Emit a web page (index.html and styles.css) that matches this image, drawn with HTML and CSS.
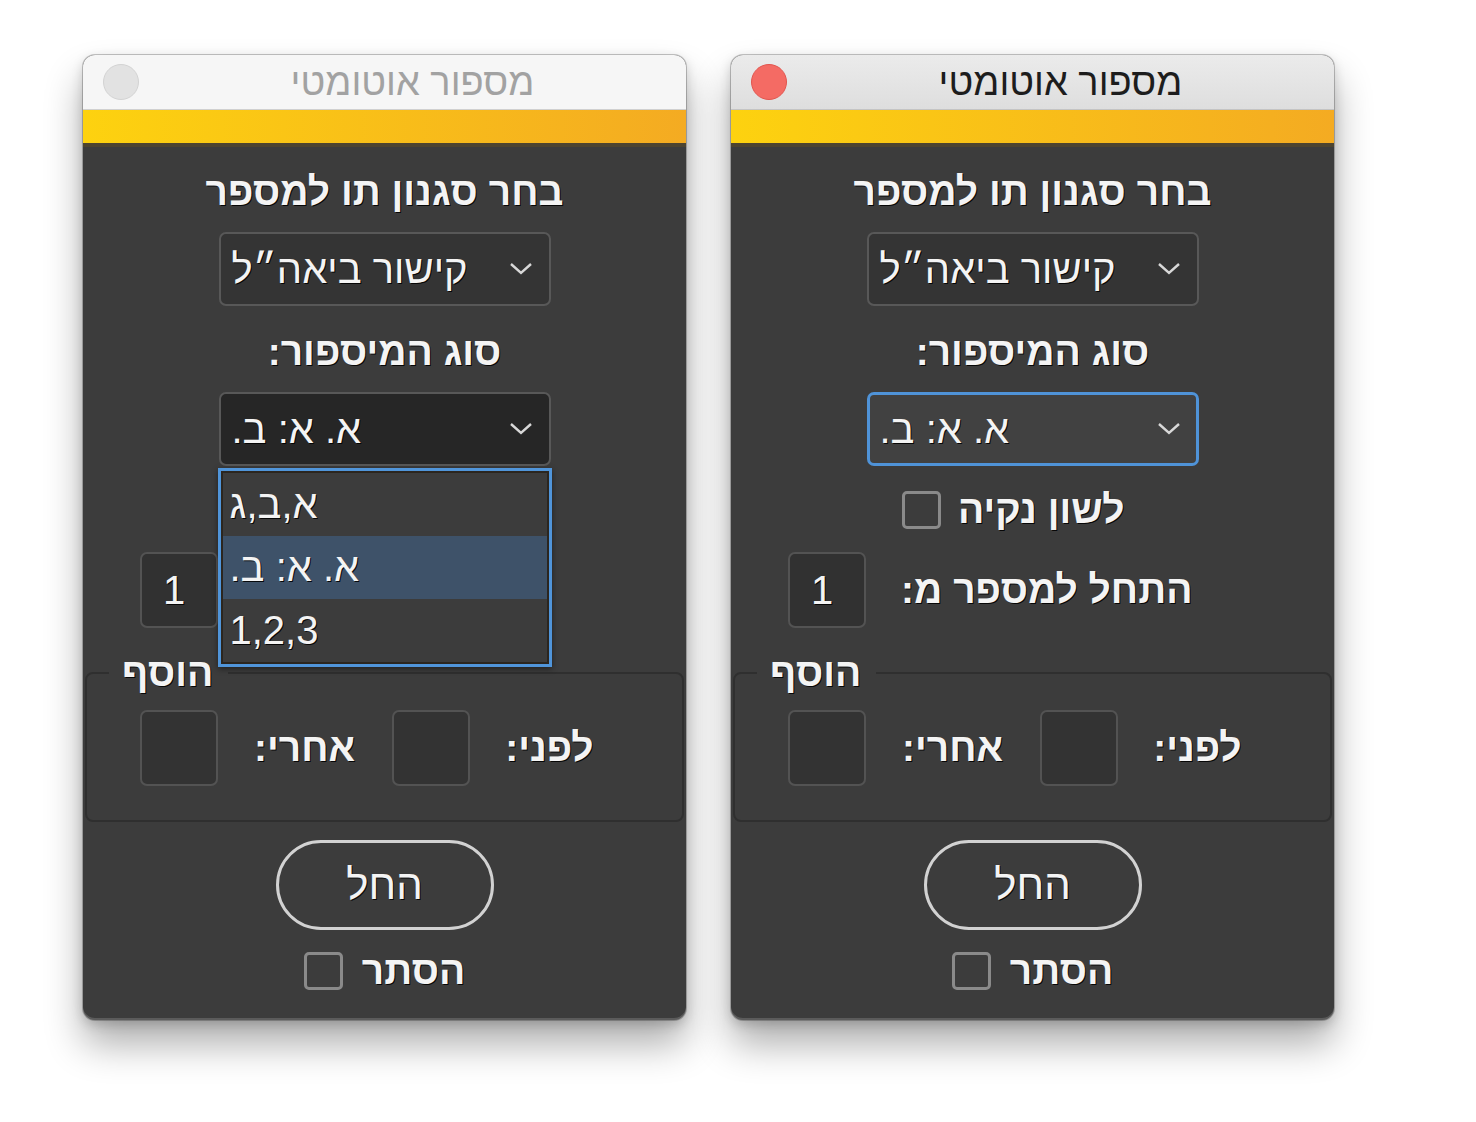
FILE: index.html
```
<!DOCTYPE html>
<html lang="he">
<head>
<meta charset="utf-8">
<title>מספור אוטומטי</title>
<link rel="stylesheet" href="styles.css">
</head>
<body>
<div class="stage">
  <div class="window inactive">
    <div class="titlebar">
      <span class="light"></span>
      <span class="title" dir="rtl">מספור אוטומטי</span>
    </div>
    <div class="accent"></div>
    <div class="content">
      <div class="heading" dir="rtl">בחר סגנון תו למספר</div>
      <div class="select">
        <span class="value" dir="rtl">קישור ביאה״ל</span>
        <svg class="chev" width="24" height="14" viewBox="0 0 24 14"><polyline points="2,2 12,11 22,2" fill="none" stroke="#d8d8d8" stroke-width="2.4"/></svg>
      </div>
      <div class="label" dir="rtl">סוג המיספור:</div>
      <div class="select-wrap">
        <div class="select open">
          <span class="value" dir="rtl">א. א: ב.</span>
          <svg class="chev" width="24" height="14" viewBox="0 0 24 14"><polyline points="2,2 12,11 22,2" fill="none" stroke="#d8d8d8" stroke-width="2.4"/></svg>
        </div>
        <div class="menu">
          <div class="item"><span dir="rtl">א,ב,ג</span></div>
          <div class="item selected"><span dir="rtl">א. א: ב.</span></div>
          <div class="item"><span dir="rtl">1,2,3</span></div>
        </div>
      </div>
      <div class="check-row covered">
        <span class="checkbox"></span>
        <span class="text" dir="rtl">לשון נקיה</span>
      </div>
      <div class="num-row">
        <div class="field">1</div>
        <span class="text covered" dir="rtl">התחל למספר מ:</span>
      </div>
      <fieldset class="group">
        <legend dir="rtl">הוסף</legend>
        <div class="group-body">
          <div class="field"></div>
          <span class="text after" dir="rtl">אחרי:</span>
          <div class="field"></div>
          <span class="text before" dir="rtl">לפני:</span>
        </div>
      </fieldset>
      <button class="apply" dir="rtl">החל</button>
      <div class="hide-row">
        <span class="checkbox"></span>
        <span class="text" dir="rtl">הסתר</span>
      </div>
    </div>
  </div>

  <div class="window active">
    <div class="titlebar">
      <span class="light"></span>
      <span class="title" dir="rtl">מספור אוטומטי</span>
    </div>
    <div class="accent"></div>
    <div class="content">
      <div class="heading" dir="rtl">בחר סגנון תו למספר</div>
      <div class="select">
        <span class="value" dir="rtl">קישור ביאה״ל</span>
        <svg class="chev" width="24" height="14" viewBox="0 0 24 14"><polyline points="2,2 12,11 22,2" fill="none" stroke="#d8d8d8" stroke-width="2.4"/></svg>
      </div>
      <div class="label" dir="rtl">סוג המיספור:</div>
      <div class="select-wrap">
        <div class="select focus">
          <span class="value" dir="rtl">א. א: ב.</span>
          <svg class="chev" width="24" height="14" viewBox="0 0 24 14"><polyline points="2,2 12,11 22,2" fill="none" stroke="#d8d8d8" stroke-width="2.4"/></svg>
        </div>
      </div>
      <div class="check-row">
        <span class="checkbox"></span>
        <span class="text" dir="rtl">לשון נקיה</span>
      </div>
      <div class="num-row">
        <div class="field">1</div>
        <span class="text" dir="rtl">התחל למספר מ:</span>
      </div>
      <fieldset class="group">
        <legend dir="rtl">הוסף</legend>
        <div class="group-body">
          <div class="field"></div>
          <span class="text after" dir="rtl">אחרי:</span>
          <div class="field"></div>
          <span class="text before" dir="rtl">לפני:</span>
        </div>
      </fieldset>
      <button class="apply" dir="rtl">החל</button>
      <div class="hide-row">
        <span class="checkbox"></span>
        <span class="text" dir="rtl">הסתר</span>
      </div>
    </div>
  </div>
</div>
</body>
</html>
```

FILE: styles.css
```
* { box-sizing: border-box; }

html, body {
  margin: 0;
  background: #ffffff;
}

body {
  font-family: "Liberation Sans", "DejaVu Sans", Arial, sans-serif;
}

.stage {
  display: flex;
  align-items: flex-start;
  gap: 45px;
  min-height: 1122px;
  padding: 55px 0 0 83px;
}

.window {
  width: 603px;
  border-radius: 12px;
  background: #3c3c3c;
  box-shadow:
    inset 0 -2px 0 rgba(255, 255, 255, 0.16),
    0 0 0 1px rgba(0, 0, 0, 0.22),
    0 24px 38px rgba(0, 0, 0, 0.32),
    0 4px 12px rgba(0, 0, 0, 0.18);
}

.titlebar {
  height: 55px;
  display: flex;
  align-items: center;
  padding-left: 20px;
  border-bottom: 1px solid #c4c4c4;
  border-radius: 12px 12px 0 0;
  background: linear-gradient(#ebebeb, #dedede);
}

.light {
  flex: none;
  width: 36px;
  height: 36px;
  border-radius: 50%;
  background: #f46b64;
  border: 1px solid #e2554e;
}

.title {
  flex: 1;
  text-align: center;
  font-size: 38px;
  color: #1d1d1d;
  line-height: 55px;
}

.inactive .titlebar {
  background: #f6f6f6;
  border-bottom-color: #d0d0d0;
}

.inactive .light {
  background: #e2e2e2;
  border-color: #d3d3d3;
}

.inactive .title {
  color: #a2a2a2;
}

.accent {
  height: 37px;
  background: linear-gradient(90deg, #fdd20f, #f4ab22);
  border-bottom: 4px solid #4d4430;
}

.content {
  display: flex;
  flex-direction: column;
  padding-bottom: 30px;
  color: #f4f4f4;
  text-shadow: 1px 1px 0 rgba(0, 0, 0, 0.9);
}

.heading,
.label {
  text-align: center;
  font-size: 39px;
  font-weight: bold;
  line-height: 44px;
}

.heading { margin-top: 23px; }
.label { margin-top: 24px; }

.select {
  width: 332px;
  height: 74px;
  margin: 18px auto 0;
  display: flex;
  align-items: center;
  justify-content: space-between;
  padding: 0 16px 0 11px;
  border: 2px solid #585858;
  border-radius: 7px;
  background: #343434;
}

.select-wrap {
  position: relative;
  width: 332px;
  margin: 18px auto 0;
}

.select-wrap .select { margin: 0; }

.select.open { background: #262626; }

.select.focus {
  border: 3px solid #4f93d8;
  background: #414141;
  padding: 0 15px 0 10px;
}

.value {
  font-size: 40px;
  line-height: 44px;
}

.chev { flex: none; }

.menu {
  position: absolute;
  top: calc(100% + 2px);
  left: -1px;
  width: 334px;
  z-index: 2;
  padding: 2px;
  border: 3px solid #5095da;
  background: #3c3c3c;
  box-shadow: inset 0 0 0 2px #2b2620, 0 2px 6px rgba(0, 0, 0, 0.45);
}

.item {
  height: 63px;
  display: flex;
  align-items: center;
  padding-left: 7px;
  font-size: 40px;
}

.item.selected { background: #3e5269; }

.text {
  font-size: 39px;
  font-weight: bold;
  line-height: 44px;
}

.covered { visibility: hidden; }

.checkbox {
  flex: none;
  width: 39px;
  height: 38px;
  border: 3px solid #8a8a8a;
  border-radius: 5px;
}

.check-row {
  margin-top: 24px;
  height: 40px;
  display: flex;
  align-items: center;
  gap: 17px;
  padding-left: 171px;
}

.num-row {
  margin-top: 22px;
  display: flex;
  align-items: center;
  gap: 35px;
  padding-left: 57px;
}

.field {
  flex: none;
  width: 78px;
  height: 76px;
  display: flex;
  align-items: center;
  padding-left: 21px;
  border: 2px solid #535353;
  border-radius: 7px;
  background: #313131;
  font-size: 40px;
}

.group {
  margin: 30px 2px 0;
  padding: 0;
  border: 2px solid #2f2f2f;
  border-radius: 8px;
  min-width: 0;
}

.group legend {
  margin-left: 22px;
  padding: 0 15px 0 13px;
  font-size: 39px;
  font-weight: bold;
  line-height: 30px;
}

.group-body {
  display: flex;
  align-items: center;
  padding: 22px 0 34px 53px;
}

.group .field { background: #333333; }

.group .after {
  margin-left: 36px;
  margin-right: 37px;
}

.group .before {
  margin-left: 35px;
}

.apply {
  align-self: center;
  width: 218px;
  height: 90px;
  margin-top: 18px;
  border: 3px solid #d2d2d2;
  border-radius: 45px;
  background: transparent;
  color: #f4f4f4;
  font-family: inherit;
  font-size: 42px;
  text-shadow: 1px 1px 0 rgba(0, 0, 0, 0.9);
}

.hide-row {
  margin-top: 22px;
  height: 38px;
  display: flex;
  justify-content: center;
  align-items: center;
  gap: 19px;
}
```
